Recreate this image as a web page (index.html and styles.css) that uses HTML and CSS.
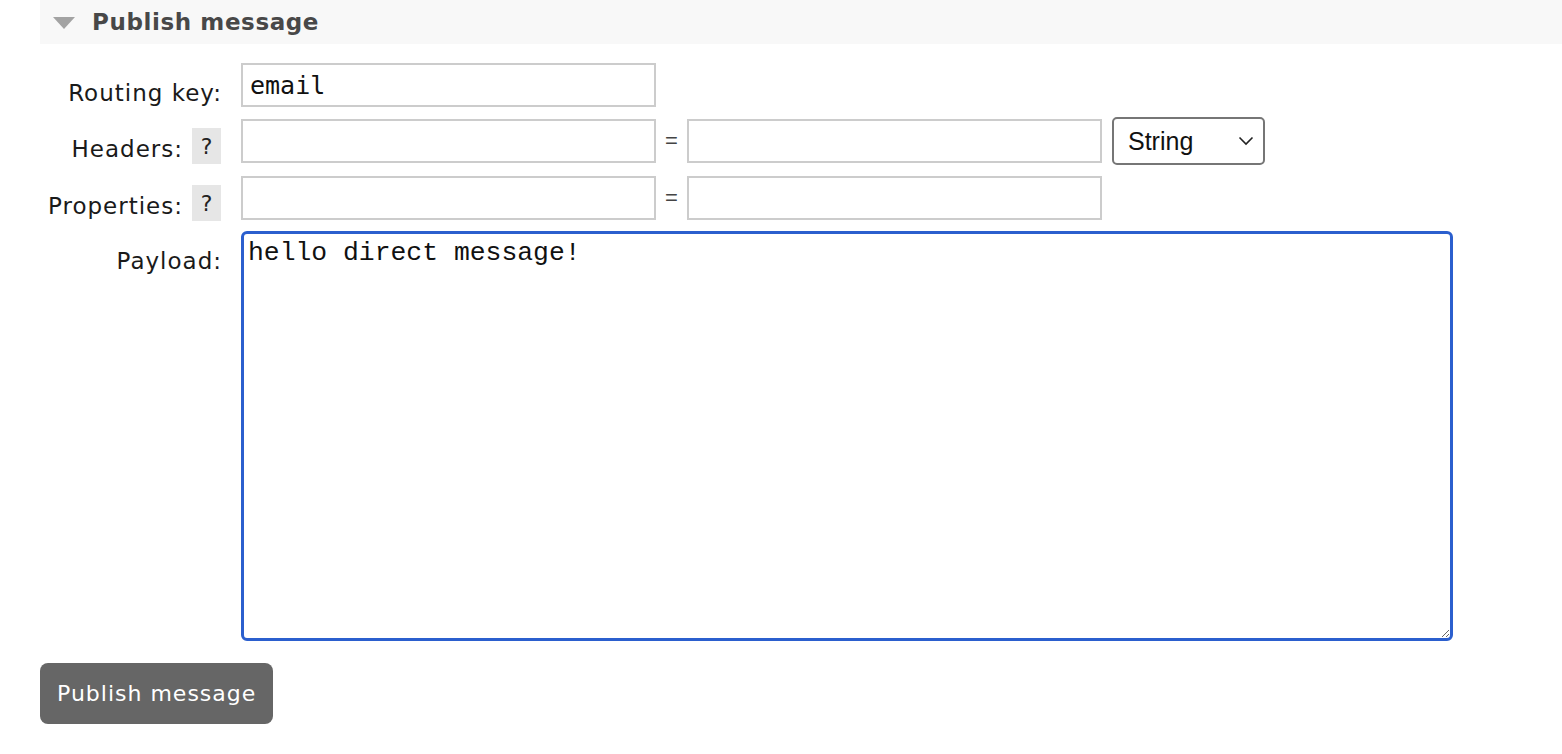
FILE: index.html
```html
<!DOCTYPE html>
<html>
<head>
<meta charset="utf-8">
<link rel="stylesheet" href="styles.css">
</head>
<body>
<div class="section">
  <h2 class="section-head"><span class="tri"></span>Publish message</h2>
  <form class="form">
    <div class="label"><span class="ltext">Routing key:</span></div>
    <div class="field"><input class="text mono" type="text" value="email"></div>

    <div class="label"><span class="ltext">Headers:</span><span class="help">?</span></div>
    <div class="field">
      <input class="text" type="text">
      <span class="eq">=</span>
      <input class="text" type="text">
      <div class="select-wrap">
        <select class="select"><option>String</option><option>Number</option><option>Boolean</option><option>List</option></select>
        <svg class="chev" width="16" height="10" viewBox="0 0 16 10"><path d="M1.5 1.5 L8 8 L14.5 1.5" fill="none" stroke="#222" stroke-width="1.6"/></svg>
      </div>
    </div>

    <div class="label"><span class="ltext">Properties:</span><span class="help">?</span></div>
    <div class="field">
      <input class="text" type="text">
      <span class="eq">=</span>
      <input class="text" type="text">
    </div>

    <div class="label label-top"><span class="ltext">Payload:</span></div>
    <div class="field"><textarea class="payload">hello direct message!</textarea></div>
  </form>
  <button class="btn" type="button">Publish message</button>
</div>
</body>
</html>
```

FILE: styles.css
```css
html, body {
  margin: 0;
  padding: 0;
  background: #fff;
}
body {
  font-family: "DejaVu Sans", Verdana, sans-serif;
  color: #1a1a1a;
}
.section {
  padding-left: 40px;
}
.section-head {
  margin: 0;
  height: 44px;
  background: #f8f8f8;
  display: flex;
  align-items: center;
  font-size: 23px;
  font-weight: bold;
  letter-spacing: 0.6px;
  color: #484848;
  padding-left: 13px;
}
.tri {
  width: 0;
  height: 0;
  border-left: 11px solid transparent;
  border-right: 11px solid transparent;
  border-top: 12px solid #a3a3a3;
  margin-right: 17px;
  margin-top: 2px;
}
.form {
  display: grid;
  grid-template-columns: 181px 1fr;
  column-gap: 20px;
  row-gap: 10px;
  margin-top: 19px;
}
.label {
  display: flex;
  align-items: center;
  justify-content: flex-end;
  gap: 10px;
  font-size: 23px;
  padding-top: 10px;
}
.ltext {
  padding-top: 6px;
  letter-spacing: 1px;
  margin-right: -1px;
}
.label-top {
  align-items: flex-start;
  padding-top: 11px;
}
.help {
  width: 29px;
  height: 36px;
  background: #e6e6e6;
  display: flex;
  align-items: center;
  justify-content: center;
  font-size: 22px;
  color: #222;
}
.field {
  display: flex;
  align-items: center;
}
.text {
  box-sizing: border-box;
  width: 415px;
  height: 44px;
  border: 2px solid #cccccc;
  padding: 0 7px;
  font-size: 22px;
  margin: 0;
  background: #fff;
  outline: none;
}
.mono {
  font-family: "DejaVu Sans Mono", monospace;
  font-size: 25px;
  color: #111;
}
.eq {
  width: 31px;
  text-align: center;
  font-family: "Liberation Sans", Arial, sans-serif;
  font-size: 22px;
  color: #444;
}
.select-wrap {
  position: relative;
  margin-left: 10px;
}
.select {
  appearance: none;
  -webkit-appearance: none;
  box-sizing: border-box;
  width: 153px;
  height: 48px;
  border: 2px solid #767676;
  border-radius: 5px;
  background: #fff;
  font-family: "Liberation Sans", Arial, sans-serif;
  font-size: 25px;
  color: #111;
  padding: 0 0 0 14px;
  margin: 0;
  outline: none;
}
.chev {
  position: absolute;
  right: 11px;
  top: 19px;
  pointer-events: none;
}
.payload {
  box-sizing: border-box;
  width: 1212px;
  height: 410px;
  border: 3px solid #2b5fce;
  border-radius: 6px;
  padding: 4px 4px;
  font-family: "Liberation Mono", "Courier New", monospace;
  font-size: 26.4px;
  color: #111;
  margin: 0;
  outline: none;
  resize: both;
}
.btn {
  margin-top: 22px;
  height: 61px;
  padding: 0 17px;
  border: none;
  border-radius: 8px;
  background: #666666;
  color: #fff;
  font-family: "DejaVu Sans", Verdana, sans-serif;
  font-size: 22px;
  letter-spacing: 1px;
  cursor: pointer;
}
```
